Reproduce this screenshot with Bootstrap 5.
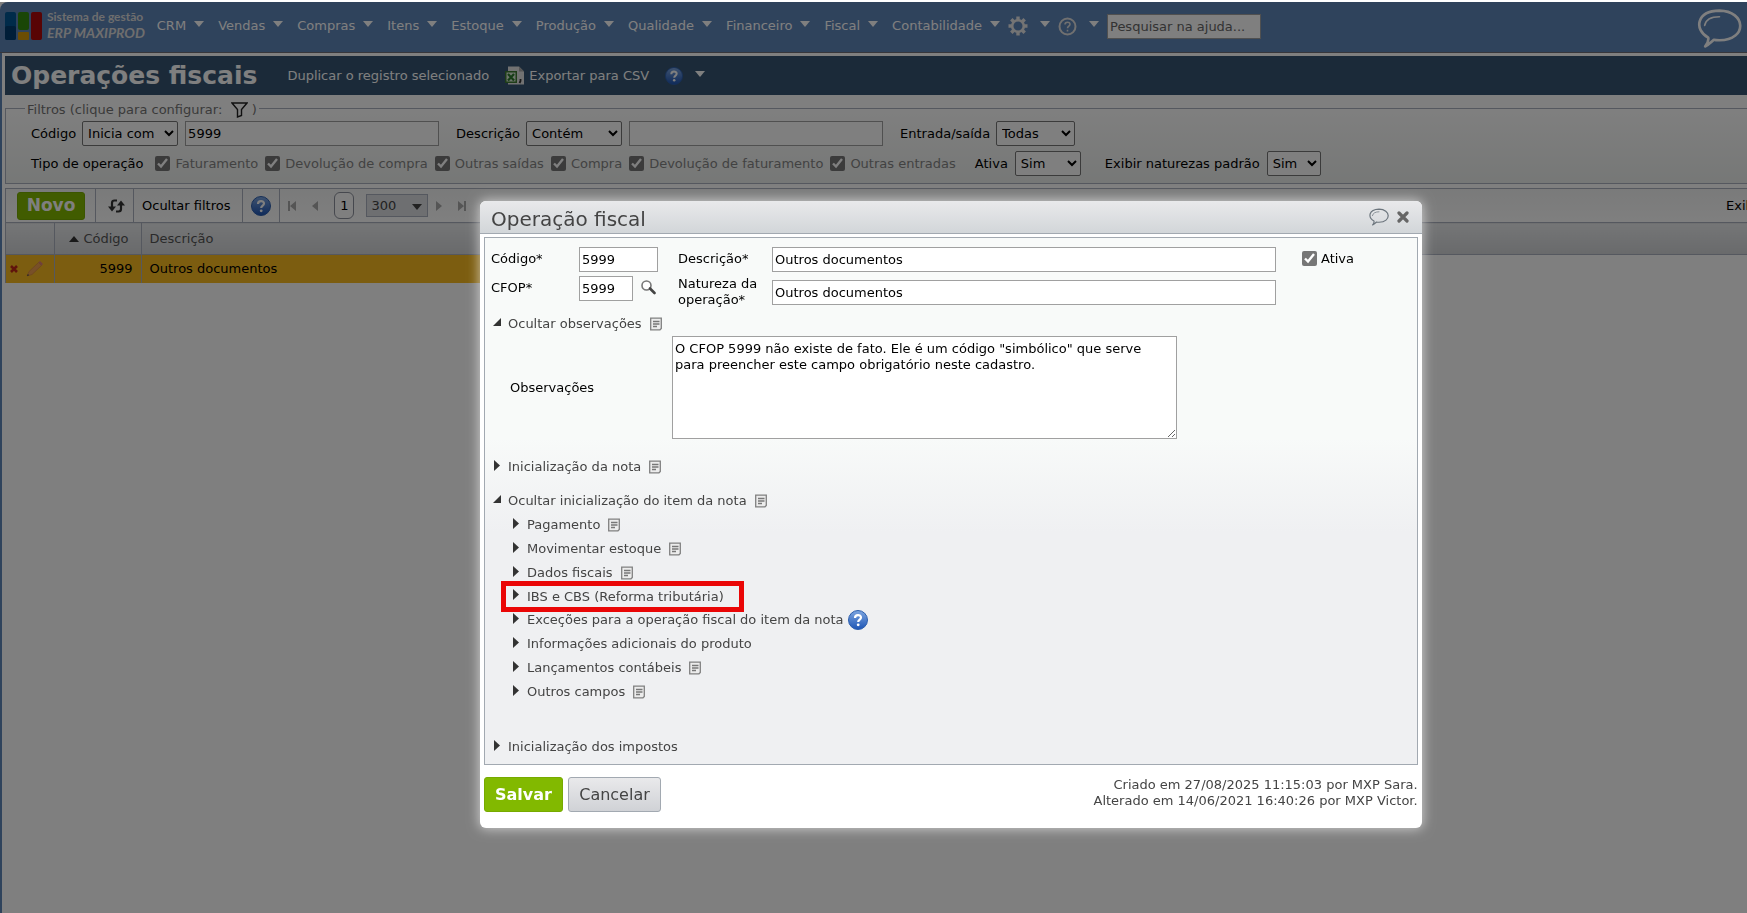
<!DOCTYPE html>
<html lang="pt-br">
<head>
    <meta charset="UTF-8">
    <meta name="viewport" content="width=device-width, initial-scale=1.0">
    <title>Operações fiscais</title>
    <link href="https://cdn.jsdelivr.net/npm/bootstrap@5.3.0/dist/css/bootstrap.min.css" rel="stylesheet">
    <style>
        body {
            font-family: "DejaVu Sans", sans-serif;
            font-size: 13px;
            line-height: 16px;
            color: #000;
            background-color: #fff;
            padding-top: 2px;
            min-height: 100vh;
            overflow: hidden;
        }

        svg {
            display: block;
            flex-shrink: 0;
        }

        input, select, textarea, button {
            font-size: 13px;
            color: #000;
        }

        input[type="text"], input[type="search"], textarea {
            border: 1px solid #a0a0a0;
            background-color: #fff;
            padding: 1px 2px;
            height: 25px;
            border-radius: 0;
        }

        select {
            border: 1px solid #767676;
            border-radius: 2px;
            background-color: #fff;
            height: 25px;
            padding: 0 1px;
        }

        input[type="checkbox"] {
            width: 15px;
            height: 15px;
            margin: 0;
            accent-color: #767676;
            flex-shrink: 0;
        }

        /* Menu superior */
        .topo {
            height: 51px;
            background-color: #5f86b8;
            border-bottom: 1px solid #6f6f78;
            border-top-left-radius: 8px;
            padding: 0 5px 2px 5px;
        }

        .logo-texto {
            font-family: Lato, sans-serif;
            font-weight: 700;
            font-size: 12px;
            line-height: 16px;
            color: #dcdcdc;
            margin: 0 12px 2px 5px;
        }

        .logo-texto em {
            font-size: 14px;
        }

        .menu-link {
            display: flex;
            align-items: center;
            gap: 8px;
            margin-right: 14px;
            color: #fff;
            text-decoration: none;
        }

        .seta {
            border: 5px solid transparent;
            border-top: 6px solid #fff;
            border-bottom: 0;
            margin-bottom: 4px;
        }

        .menu-icone {
            gap: 12px;
            margin-right: 8px;
        }

        .pesquisa {
            width: 154px;
        }

        .pesquisa::placeholder {
            color: #666;
            opacity: 1;
        }

        /* Área da página */
        .pagina {
            border-left: 2px solid #5f86b8;
            padding: 3px 0 0 3px;
            min-height: calc(100vh - 53px);
        }

        .barra-titulo {
            height: 39px;
            background-color: #365572;
            color: #fff;
            padding-left: 6px;
        }

        .barra-titulo h1 {
            font-size: 25px;
            line-height: 36px;
            font-weight: 700;
            margin: 0 30px 0 0;
        }

        .barra-titulo a {
            color: #fff;
            text-decoration: none;
        }

        .filtros {
            border: 1px solid #aab0be;
            border-right: 0;
            background: linear-gradient(#fff, #edf0ee);
            height: 87px;
            padding: 0 0 0 25px;
            margin-top: 2px;
            white-space: nowrap;
        }

        .filtros legend {
            float: none;
            width: auto;
            font-size: 13px;
            line-height: 18px;
            color: #757575;
            padding: 4px 2px 0 2px;
            margin: 0 0 2px -6px;
        }

        .campos label {
            margin-right: 6px;
        }

        .marcadores {
            margin-top: 5px;
        }

        .marcadores label {
            color: #858585;
            margin: 0 7px 0 5px;
        }

        .campo-filtro {
            width: 254px;
            margin: 0 17px 0 7px;
        }

        .grade {
            border: 1px solid #aab0be;
            border-right: 0;
            border-bottom: 0;
            margin-top: 4px;
        }

        .ferramentas {
            height: 33px;
            background: linear-gradient(#f4f5f5, #fff);
        }

        .divisor {
            width: 1px;
            height: 33px;
            background-color: #aab0be;
        }

        .btn-verde, .btn-verde:hover {
            background-color: #82b900;
            border: 1px solid #77aa00;
            border-radius: 3px;
            color: #fff;
            font-weight: 700;
            padding: 0;
        }

        .btn-novo {
            width: 68px;
            height: 28px;
            font-size: 17px;
            margin: 0 10px 0 11px;
        }

        .paginador {
            fill: #aaa;
        }

        .numero-pagina {
            width: 20px;
            height: 27px;
            border: 1px solid #8c909c;
            border-radius: 6px;
            line-height: 25px;
            background-color: #fff;
        }

        .por-pagina {
            width: 62px;
            height: 23px;
            border-color: #aab0be;
            border-radius: 0;
            background-color: #dcdee2;
            color: #444;
            appearance: none;
            padding: 0 4px;
        }

        .seta-pagina {
            right: 6px;
            top: 10px;
            border-top-color: #444;
            pointer-events: none;
        }

        .exibindo {
            width: 21px;
            overflow: hidden;
            white-space: nowrap;
        }

        .tabela {
            width: 100%;
            table-layout: fixed;
        }

        .tabela th {
            height: 32px;
            font-weight: 400;
            color: #555;
            padding: 0 8px;
            border-top: 1px solid #aab0be;
            border-bottom: 1px solid #aab0be;
            background: linear-gradient(#eaecee, #d2d4d7);
        }

        .tabela td {
            height: 28px;
            padding: 0 8px;
            background-color: #f9bb20;
        }

        .tabela th + th, .tabela td + td {
            border-left: 1px solid #aab0be;
        }

        .tabela .sem-coluna {
            border-left: 0;
        }

        .tabela td.sem-coluna {
            background-color: #fff;
        }

        .col-acoes {
            width: 48px;
        }

        .col-codigo {
            width: 87px;
        }

        .col-descricao {
            width: 700px;
        }

        /* Janela */
        .fundo {
            position: fixed;
            inset: 2px 0 0 0;
            background-color: rgba(0, 0, 0, 0.5);
        }

        .janela {
            width: 53.9%;
            margin: 199px 0 0 480px;
            background-color: #fff;
            border-radius: 6px;
            box-shadow: 0 0 12px 1px rgba(255, 255, 255, 0.6);
            color: #444;
        }

        .janela-topo {
            height: 33px;
            background: linear-gradient(#e9e9eb, #d2d6d9);
            border-bottom: 1px solid #a2a9b1;
            border-radius: 6px 6px 0 0;
            padding: 0 13px 0 11px;
        }

        .janela-topo h2 {
            font-size: 20px;
            line-height: 32px;
            font-weight: 400;
            margin: 0;
            padding-top: 4px;
            color: #444;
        }

        .janela-topo button {
            border: 0;
            background: none;
            padding: 0;
        }

        .janela-corpo {
            margin: 3px 4px 0 4px;
            border: 1px solid #a2a9b1;
            background: linear-gradient(#f8faf9 0%, #f8faf9 38%, #eff0f2 56%, #eff0f2 100%);
            padding: 9px 6px 7px 6px;
            height: 528px;
        }

        .formulario {
            display: grid;
            grid-template-columns: 88px 99px 94px minmax(0, 504px) 1fr;
            color: #000;
        }

        .formulario > * {
            min-height: 29px;
        }

        .ativa {
            padding: 4px 0 0 26px;
        }

        .texto-obs {
            display: block;
            width: 505px;
            height: 103px;
            line-height: 16px;
            padding: 4px 2px;
            margin-right: auto;
        }

        .rotulo-obs {
            width: 181px;
            padding-left: 19px;
            color: #000;
        }

        .secao {
            display: flex;
            align-items: center;
            height: 24px;
            padding-left: 2px;
            color: #444;
            text-decoration: none;
        }

        .secao span {
            margin: 0 8px 0 7px;
        }

        .secao .ajuda {
            margin-left: -4px;
        }

        .secao .triangulo {
            margin-bottom: 4px;
        }

        .subsecoes {
            padding: 2px 0 0 19px;
        }

        .destaque {
            position: relative;
            height: 23px;
            align-self: flex-start;
        }

        .destaque::after {
            content: "";
            position: absolute;
            inset: -4px -12px -4px -9px;
            border: 5px solid #ea0606;
        }

        .impostos {
            margin-top: 31px;
        }

        .btn-salvar {
            width: 79px;
            height: 35px;
            font-size: 16px;
        }

        .btn-cancelar {
            width: 93px;
            height: 35px;
            font-size: 16px;
            padding: 0;
            margin-left: 5px;
            color: #444;
            background: linear-gradient(#e9e9eb, #d0d2d6);
            border: 1px solid #a2a9b1;
            border-radius: 3px;
        }
    </style>
</head>
<body>

    <svg width="0" height="0" class="position-absolute" aria-hidden="true">
        <defs>
            <linearGradient id="azul" x1="0" y1="0" x2="0" y2="1">
                <stop offset="0" stop-color="#7ea6e0"/>
                <stop offset="1" stop-color="#1d55b5"/>
            </linearGradient>
            <symbol id="ajuda" viewBox="0 0 20 20">
                <circle cx="10" cy="10" r="9.5" fill="url(#azul)" stroke="#2d5fae"/>
                <path d="M7 8C7 4.200 13 4.200 13 7.600C13 9.600 10.200 9.600 10.200 12" fill="none" stroke="#fff" stroke-width="2.200"/>
                <circle cx="10.200" cy="14.800" r="1.400" fill="#fff"/>
            </symbol>
            <symbol id="nota" viewBox="0 0 12 14">
                <path d="M.7 1.200H11.300V11.500L10 12.800H.7Z" fill="#ececec" stroke="#808080" stroke-width="1.300"/>
                <path d="M3 4.500H9.500M3 7H9.500M3 9.500H7" stroke="#777" stroke-width="1.300"/>
            </symbol>
            <symbol id="fechado" viewBox="0 0 6 11">
                <path d="M0 0L6 5.500L0 11Z" fill="#333"/>
            </symbol>
            <symbol id="aberto" viewBox="0 0 8 8">
                <path d="M8 0V8H0Z" fill="#333"/>
            </symbol>
            <symbol id="balao" viewBox="0 0 44 38">
                <path d="M11 28C-3 20-1 2 22 1.500C48 2 50 30 22 30.500C20 30.500 18 30.500 16.500 30C13 33 11 35.500 8 36.500C10.500 33.500 11.500 31 11 28Z" fill="none" stroke="currentColor" stroke-width="2.600" stroke-linejoin="round"/>
                <path d="M7.500 16C8.500 10.500 14 7.500 22 7.500" fill="none" stroke="currentColor" stroke-width="1.600" stroke-linecap="round"/>
            </symbol>
        </defs>
    </svg>

    <header class="topo d-flex align-items-center">
        <svg width="37" height="28" viewBox="0 0 37 28">
            <rect width="11" height="28" rx="2" fill="#005694"/>
            <rect y="14" width="11" height="14" rx="2" fill="#003c70"/>
            <rect x="13" width="11" height="18" rx="2" fill="#348c0c"/>
            <rect x="13" y="20" width="11" height="8" rx="1" fill="#d69b08"/>
            <rect x="26" width="11" height="28" rx="2" fill="#b00808"/>
        </svg>
        <div class="logo-texto text-nowrap">Sistema de gestão<br><em>ERP MAXIPROD</em></div>
        <nav class="d-flex align-items-center">
            <a href="#" class="menu-link">CRM <i class="seta"></i></a>
            <a href="#" class="menu-link">Vendas <i class="seta"></i></a>
            <a href="#" class="menu-link">Compras <i class="seta"></i></a>
            <a href="#" class="menu-link">Itens <i class="seta"></i></a>
            <a href="#" class="menu-link">Estoque <i class="seta"></i></a>
            <a href="#" class="menu-link">Produção <i class="seta"></i></a>
            <a href="#" class="menu-link">Qualidade <i class="seta"></i></a>
            <a href="#" class="menu-link">Financeiro <i class="seta"></i></a>
            <a href="#" class="menu-link">Fiscal <i class="seta"></i></a>
            <a href="#" class="menu-link me-2">Contabilidade <i class="seta"></i></a>
            <a href="#" class="menu-link menu-icone" aria-label="Configurações">
                <svg width="20" height="20" viewBox="0 0 20 20" fill="none" stroke="#e8e8e8">
                    <circle cx="10" cy="10" r="5.800" stroke-width="2.600"/>
                    <path d="M10 .5V4M10 16V19.500M.5 10H4M16 10H19.500M3.300 3.300L5.800 5.800M14.200 14.200L16.700 16.700M16.700 3.300L14.200 5.800M5.800 14.200L3.300 16.700" stroke-width="3.400"/>
                </svg>
                <i class="seta"></i>
            </a>
            <a href="#" class="menu-link menu-icone" aria-label="Ajuda">
                <svg width="19" height="19" viewBox="0 0 19 19" fill="none" stroke="#e0e0e0">
                    <circle cx="9.500" cy="9.500" r="8" stroke-width="2"/>
                    <path d="M7 7.500C7 4.500 12 4.500 12 7.300C12 9 9.500 9.200 9.500 11.200M9.500 12.800V14.500" stroke-width="1.600"/>
                </svg>
                <i class="seta"></i>
            </a>
            <input type="search" class="pesquisa" placeholder="Pesquisar na ajuda..." aria-label="Pesquisar na ajuda">
        </nav>
        <a href="#" class="ms-auto mt-1 text-white" aria-label="Conversa"><svg width="45" height="39"><use href="#balao"/></svg></a>
    </header>

    <main class="pagina">
        <div class="barra-titulo d-flex align-items-center text-nowrap">
            <h1>Operações fiscais</h1>
            <a href="#" class="me-3">Duplicar o registro selecionado</a>
            <a href="#" class="d-flex align-items-center gap-1 me-3">
                <svg width="20" height="20" viewBox="0 0 20 20">
                    <path d="M3 .5H14L19 5.500V18.500H3Z" fill="#e4e4e4"/>
                    <path d="M14 .5V5.500H19Z" fill="#aaa"/>
                    <rect y="5" width="12" height="12" fill="#3c7a30"/>
                    <rect x="1.500" y="6.500" width="9" height="9" fill="#dcebd8"/>
                    <path d="M3 8L9 14.500M9 8L3 14.500" stroke="#2c7a2c" stroke-width="2.200"/>
                    <path d="M15.500 13V15L14.500 17" fill="none" stroke="#333" stroke-width="1.800"/>
                </svg>
                Exportar para CSV
            </a>
            <a href="#" class="menu-link menu-icone" aria-label="Ajuda"><svg width="18" height="18"><use href="#ajuda"/></svg><i class="seta"></i></a>
        </div>

        <fieldset class="filtros">
            <legend class="d-flex align-items-center">Filtros (clique para configurar:&nbsp;&nbsp;
                <svg width="17" height="16" viewBox="0 0 17 16"><path d="M1 1H16L10.500 7.500V13.500L6.500 15V7.500Z" fill="none" stroke="#222" stroke-width="1.400"/></svg>&nbsp;)
            </legend>
            <div class="d-flex align-items-center campos">
                <label for="opCodigo">Código</label>
                <select id="opCodigo" style="width: 96px"><option>Inicia com</option></select>
                <input type="text" class="campo-filtro" value="5999" aria-label="Código">
                <label for="opDescricao">Descrição</label>
                <select id="opDescricao" style="width: 96px"><option>Contém</option></select>
                <input type="text" class="campo-filtro" aria-label="Descrição">
                <label for="entradaSaida">Entrada/saída</label>
                <select id="entradaSaida" style="width: 79px"><option>Todas</option></select>
            </div>
            <div class="d-flex align-items-center marcadores">
                <span class="me-2 pe-1">Tipo de operação</span>
                <input type="checkbox" id="c1" checked><label for="c1">Faturamento</label>
                <input type="checkbox" id="c2" checked><label for="c2">Devolução de compra</label>
                <input type="checkbox" id="c3" checked><label for="c3">Outras saídas</label>
                <input type="checkbox" id="c4" checked><label for="c4">Compra</label>
                <input type="checkbox" id="c5" checked><label for="c5">Devolução de faturamento</label>
                <input type="checkbox" id="c6" checked><label for="c6">Outras entradas</label>
                <label for="filtroAtiva" class="text-black ms-2 ps-1">Ativa</label>
                <select id="filtroAtiva" style="width: 66px"><option>Sim</option></select>
                <label for="padrao" class="text-black ms-4">Exibir naturezas padrão</label>
                <select id="padrao" style="width: 54px"><option>Sim</option></select>
            </div>
        </fieldset>

        <section class="grade">
            <div class="ferramentas d-flex align-items-center">
                <button type="button" class="btn btn-verde btn-novo">Novo</button>
                <i class="divisor me-2"></i>
                <button type="button" class="border-0 bg-transparent p-0 mx-1" aria-label="Atualizar">
                    <svg width="17" height="14" viewBox="0 0 17 14" fill="none" stroke="#333" stroke-width="2.200">
                        <path d="M9 1.500H6.500Q4 1.500 4 4V9M8 12.500H10.500Q13 12.500 13 10V5"/>
                        <path d="M0 7.500H8L4 12.500ZM9 6.500H17L13 1.500Z" fill="#333" stroke="none"/>
                    </svg>
                </button>
                <i class="divisor ms-1 me-2"></i>
                <a href="#" class="text-black text-decoration-none me-2 pe-1">Ocultar filtros</a>
                <i class="divisor me-2"></i>
                <svg width="20" height="20"><use href="#ajuda"/></svg>
                <i class="divisor ms-2"></i>
                <svg class="paginador ms-2 me-3" width="8" height="10"><path d="M0 0H2V10H0ZM8 0V10L2 5Z"/></svg>
                <svg class="paginador me-3" width="6" height="10"><path d="M6 0V10L0 5Z"/></svg>
                <span class="numero-pagina text-center me-2">1</span>
                <span class="position-relative ms-1 me-2">
                    <select class="por-pagina" aria-label="Registros por página"><option>300</option></select>
                    <i class="seta seta-pagina position-absolute"></i>
                </span>
                <svg class="paginador me-3" width="6" height="10"><path d="M0 0V10L6 5Z"/></svg>
                <svg class="paginador" width="8" height="10"><path d="M6 0H8V10H6ZM0 0V10L6 5Z"/></svg>
                <span class="ms-auto exibindo">Exibindo</span>
            </div>
            <table class="tabela">
                <colgroup>
                    <col class="col-acoes">
                    <col class="col-codigo">
                    <col class="col-descricao">
                    <col>
                </colgroup>
                <thead>
                    <tr>
                        <th></th>
                        <th>
                            <div class="d-flex align-items-center justify-content-end pe-1">
                                <svg class="me-1" width="10" height="6"><path d="M0 6L5 0L10 6Z" fill="#333"/></svg>Código
                            </div>
                        </th>
                        <th>Descrição</th>
                        <th class="sem-coluna"></th>
                    </tr>
                </thead>
                <tbody>
                    <tr>
                        <td class="px-1">
                            <div class="d-flex align-items-center gap-2">
                                <svg width="8" height="8"><path d="M1 1L7 7M7 1L1 7" stroke="#c02818" stroke-width="2.600"/></svg>
                                <svg width="17" height="16" viewBox="0 0 17 16">
                                    <path d="M1 15L3 10.500L12.500 1.500L15.500 4.500L6 13.500Z" fill="#f0a050" stroke="#d08040" stroke-width=".6"/>
                                    <path d="M12.500 1.500L14 0L17 3L15.500 4.500Z" fill="#e08078"/>
                                    <path d="M1 15L1.900 12.900L3.200 14.200Z" fill="#444"/>
                                </svg>
                            </div>
                        </td>
                        <td class="text-end">5999</td>
                        <td>Outros documentos</td>
                        <td class="sem-coluna"></td>
                    </tr>
                </tbody>
            </table>
        </section>
    </main>

    <div class="fundo d-flow-root overflow-hidden">
        <div class="janela" role="dialog" aria-labelledby="tituloJanela">
            <div class="janela-topo d-flex align-items-center">
                <h2 id="tituloJanela">Operação fiscal</h2>
                <button type="button" class="ms-auto me-2 text-secondary" aria-label="Conversa"><svg width="20" height="18"><use href="#balao"/></svg></button>
                <button type="button" aria-label="Fechar"><svg width="12" height="12"><path d="M2 2L10 10M10 2L2 10" stroke="#666" stroke-width="3.200" stroke-linecap="round"/></svg></button>
            </div>

            <div class="janela-corpo">
                <div class="formulario">
                    <label for="codigo" class="pt-1">Código*</label>
                    <div><input type="text" id="codigo" value="5999" style="width: 79px"></div>
                    <label for="descricao" class="pt-1">Descrição*</label>
                    <div><input type="text" id="descricao" class="w-100" value="Outros documentos"></div>
                    <div class="d-flex ativa">
                        <input type="checkbox" id="ativa" checked><label for="ativa" class="ps-1">Ativa</label>
                    </div>
                    <label for="cfop" class="pt-1">CFOP*</label>
                    <div class="d-flex">
                        <input type="text" id="cfop" value="5999" style="width: 54px">
                        <svg class="mt-1 ms-2" width="15" height="15" viewBox="0 0 15 15">
                            <circle cx="5.500" cy="5.500" r="4.500" fill="#fff" stroke="#777" stroke-width="1.600"/>
                            <path d="M9 8.500L13.500 13" stroke="#444" stroke-width="2.600" stroke-linecap="round"/>
                        </svg>
                    </div>
                    <label for="natureza">Natureza da<br>operação*</label>
                    <div class="pt-1"><input type="text" id="natureza" class="w-100" value="Outros documentos"></div>
                </div>

                <a href="#" class="secao mt-1"><svg class="triangulo" width="8" height="8"><use href="#aberto"/></svg><span>Ocultar observações</span><svg width="12" height="14"><use href="#nota"/></svg></a>
                <div class="d-flex align-items-center mb-3">
                    <label for="observacoes" class="rotulo-obs">Observações</label>
                    <textarea id="observacoes" class="texto-obs">O CFOP 5999 não existe de fato. Ele é um código "simbólico" que serve para preencher este campo obrigatório neste cadastro.</textarea>
                </div>
                <a href="#" class="secao mb-2"><svg class="triangulo" width="8" height="11"><use href="#fechado"/></svg><span>Inicialização da nota</span><svg width="12" height="14"><use href="#nota"/></svg></a>
                <a href="#" class="secao mt-1 pt-1"><svg class="triangulo" width="8" height="8"><use href="#aberto"/></svg><span>Ocultar inicialização do item da nota</span><svg width="12" height="14"><use href="#nota"/></svg></a>
                <div class="subsecoes d-flex flex-column">
                    <a href="#" class="secao"><svg class="triangulo" width="8" height="11"><use href="#fechado"/></svg><span>Pagamento</span><svg width="12" height="14"><use href="#nota"/></svg></a>
                    <a href="#" class="secao"><svg class="triangulo" width="8" height="11"><use href="#fechado"/></svg><span>Movimentar estoque</span><svg width="12" height="14"><use href="#nota"/></svg></a>
                    <a href="#" class="secao"><svg class="triangulo" width="8" height="11"><use href="#fechado"/></svg><span>Dados fiscais</span><svg width="12" height="14"><use href="#nota"/></svg></a>
                    <a href="#" class="secao destaque"><svg class="triangulo" width="8" height="11"><use href="#fechado"/></svg><span>IBS e CBS (Reforma tributária)</span></a>
                    <a href="#" class="secao"><svg class="triangulo" width="8" height="11"><use href="#fechado"/></svg><span>Exceções para a operação fiscal do item da nota</span><svg class="ajuda" width="20" height="20"><use href="#ajuda"/></svg></a>
                    <a href="#" class="secao"><svg class="triangulo" width="8" height="11"><use href="#fechado"/></svg><span>Informações adicionais do produto</span></a>
                    <a href="#" class="secao"><svg class="triangulo" width="8" height="11"><use href="#fechado"/></svg><span>Lançamentos contábeis</span><svg width="12" height="14"><use href="#nota"/></svg></a>
                    <a href="#" class="secao"><svg class="triangulo" width="8" height="11"><use href="#fechado"/></svg><span>Outros campos</span><svg width="12" height="14"><use href="#nota"/></svg></a>
                </div>
                <a href="#" class="secao impostos"><svg class="triangulo" width="8" height="11"><use href="#fechado"/></svg><span>Inicialização dos impostos</span></a>
            </div>

            <div class="d-flex align-items-start px-1 pt-2 pb-3">
                <button type="button" class="btn btn-verde btn-salvar mt-1">Salvar</button>
                <button type="button" class="btn btn-cancelar mt-1">Cancelar</button>
                <div class="ms-auto mt-1 text-end">Criado em 27/08/2025 11:15:03 por MXP Sara.<br>Alterado em 14/06/2021 16:40:26 por MXP Victor.</div>
            </div>
        </div>
    </div>

    <script src="https://cdn.jsdelivr.net/npm/bootstrap@5.3.0/dist/js/bootstrap.bundle.min.js"></script>
</body>
</html>
